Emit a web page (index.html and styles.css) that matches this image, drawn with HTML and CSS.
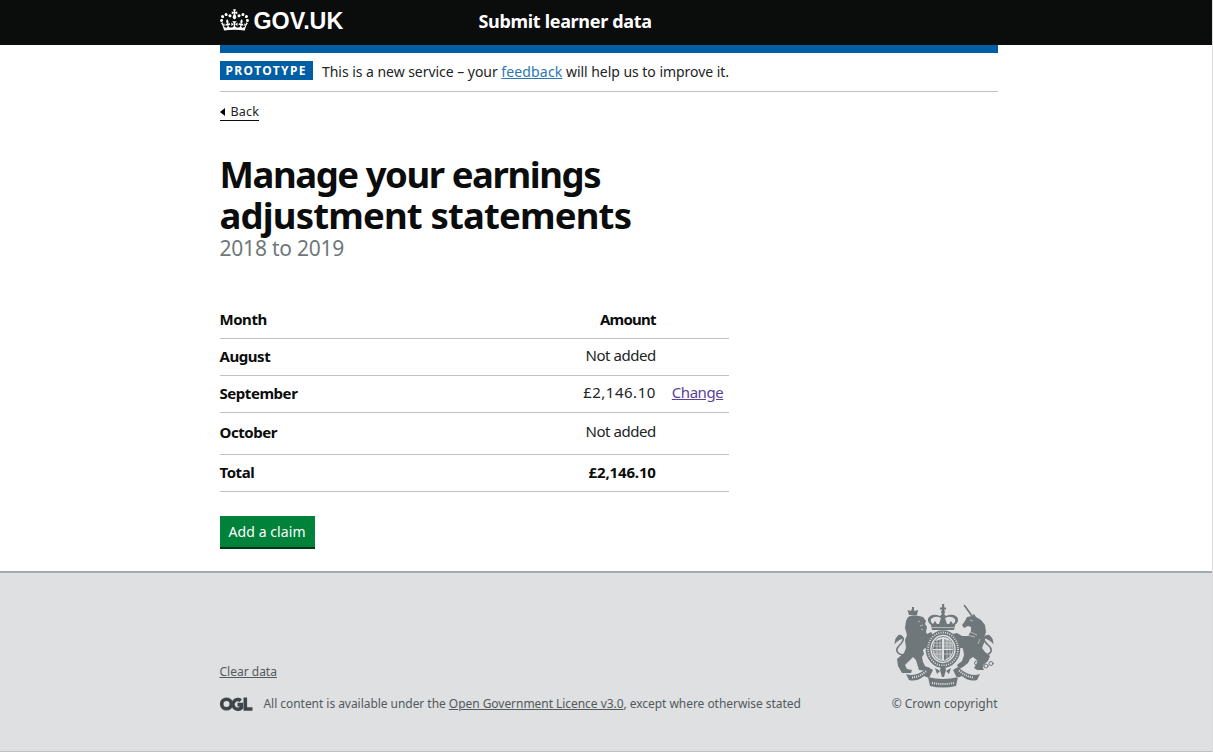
FILE: index.html
```html
<!DOCTYPE html>
<html lang="en">
<head>
<meta charset="utf-8">
<title>Manage your earnings adjustment statements</title>
<link rel="stylesheet" href="styles.css">
</head>
<body>
<header class="header">
  <div class="container header-inner">
    <a class="logo">
      <svg class="crown" viewBox="0 0 132 97" fill="currentColor"><path fill-rule="evenodd" d="M25 30.2c3.5 1.5 7.7-.2 9.1-3.7 1.5-3.6-.2-7.8-3.9-9.2-3.6-1.4-7.6.3-9.1 3.9-1.4 3.5.3 7.5 3.9 9zM9 39.5c3.6 1.5 7.8-.2 9.2-3.7 1.5-3.6-.2-7.8-3.9-9.1-3.6-1.5-7.6.2-9.1 3.8-1.4 3.5.3 7.5 3.8 9zM4.4 57.2c3.5 1.5 7.7-.2 9.1-3.8 1.5-3.6-.2-7.7-3.9-9.1-3.5-1.5-7.6.3-9.1 3.8-1.4 3.5.3 7.6 3.9 9.1zm38.3-21.4c3.5 1.5 7.7-.2 9.1-3.8 1.5-3.6-.2-7.7-3.9-9.1-3.6-1.5-7.6.3-9.1 3.8-1.3 3.6.4 7.7 3.9 9.1zm64.4-5.6c-3.6 1.5-7.8-.2-9.1-3.7-1.5-3.6.2-7.8 3.8-9.2 3.6-1.4 7.7.3 9.2 3.9 1.3 3.5-.4 7.5-3.9 9zm15.9 9.3c-3.6 1.5-7.7-.2-9.1-3.7-1.5-3.6.2-7.8 3.7-9.1 3.6-1.5 7.7.2 9.2 3.8 1.5 3.5-.3 7.5-3.8 9zm4.7 17.7c-3.6 1.5-7.8-.2-9.2-3.8-1.5-3.6.2-7.7 3.9-9.1 3.6-1.5 7.7.3 9.2 3.8 1.3 3.5-.4 7.6-3.9 9.1zM89.3 35.8c-3.6 1.5-7.8-.2-9.2-3.8-1.4-3.6.2-7.7 3.9-9.1 3.6-1.5 7.7.3 9.2 3.8 1.4 3.6-.3 7.7-3.9 9.1zM69.7 17.7l8.9 4.7V9.3l-8.9 2.8c-.2-.3-.5-.6-.9-.9L72.4 0H59.6l3.5 11.2c-.3.3-.6.5-.9.9l-8.8-2.8v13.1l8.8-4.7c.3.3.6.7.9.9l-5 15.4v.1c-.2.8-.4 1.6-.4 2.4 0 4.1 3.1 7.5 7 8.1h.2c.3 0 .7.1 1 .1.4 0 .7 0 1-.1h.2c4-.6 7.1-4.1 7.1-8.1 0-.8-.1-1.7-.4-2.4V34l-5.1-15.4c.4-.2.7-.6 1-.9zM66 92.8c16.9 0 32.8 1.1 47.1 3.2 4-16.9 8.9-26.7 14-33.5l-9.6-3.4c1 4.9 1.1 7.2 0 10.2-1.5-1.4-3-4.3-4.2-8.7L108.6 76c2.8-2 5-3.2 7.5-3.3-4.4 9.4-10 11.9-13.6 11.2-4.3-.8-6.3-4.6-5.6-7.9 1-4.7 5.7-5.9 8-.5 4.3-8.7-3-11.4-7.6-8.8 7.1-7.2 7.9-13.5 2.1-21.1-8 6.1-8.1 12.3-4.5 20.8-4.7-5.4-12.1-2.5-9.5 6.2 3.4-5.2 7.9-2 7.2 3.1-.6 4.3-6.4 7.8-13.5 7.2-10.3-.9-10.9-8-11.2-13.8 2.5-.5 7.1 1.8 11 7.3L80.2 60c-4.1 4.4-8 5.3-12.3 5.4 1.4-4.4 8-11.6 8-11.6H55.5s6.4 7.2 7.9 11.6c-4.2-.1-8-1-12.3-5.4l1.4 16.4c3.9-5.5 8.5-7.7 10.9-7.3-.3 5.8-.9 12.8-11.1 13.8-7.2.6-12.9-2.9-13.5-7.2-.7-5 3.8-8.3 7.1-3.1 2.7-8.7-4.6-11.6-9.4-6.2 3.7-8.5 3.6-14.7-4.6-20.8-5.8 7.6-5 13.9 2.2 21.1-4.7-2.6-11.9.1-7.7 8.8 2.3-5.5 7.1-4.2 8.1.5.7 3.3-1.3 7.1-5.7 7.9-3.5.7-9-1.8-13.5-11.2 2.5.1 4.7 1.3 7.5 3.3l-4.7-15.4c-1.2 4.4-2.7 7.2-4.3 8.7-1.1-3-.9-5.3 0-10.2l-9.5 3.4c5 6.9 9.9 16.7 14 33.5 14.8-2.1 30.8-3.2 47.7-3.2z"/></svg>
      <span class="logo-text">GOV.UK</span>
    </a>
    <a class="service">Submit learner data</a>
  </div>
</header>
<main class="container main">
  <div class="phase">
    <strong class="tag">PROTOTYPE</strong>
    <span class="phase-text">This is a new service – your <a class="link">feedback</a> will help us to improve it.</span>
  </div>
  <a class="back"><svg class="arrow" viewBox="0 0 5 8"><path d="M5 0v8L0 4z"/></svg>Back</a>
  <h1 class="title"><span class="title-first">Manage your earnings</span><br>adjustment statements</h1>
  <p class="years">2018 to 2019</p>
  <div class="table">
    <div class="row"><b class="month">Month</b><b class="amount">Amount</b></div>
    <div class="row"><b class="month">August</b><span class="amount">Not added</span></div>
    <div class="row"><b class="month">September</b><span class="amount sum">£2,146.10</span><a class="change">Change</a></div>
    <div class="row row-tall"><b class="month">October</b><span class="amount">Not added</span></div>
    <div class="row row-total"><b class="month">Total</b><b class="amount total">£2,146.10</b></div>
  </div>
  <a class="button">Add a claim</a>
</main>
<footer class="footer">
  <div class="container footer-inner">
    <div class="meta">
      <a class="clear">Clear data</a>
      <div class="licence">
        <svg class="ogl" viewBox="0 0 33 14" fill="none" stroke="#3f4649" stroke-width="3.6"><circle cx="6.5" cy="7" r="4.800"/><path d="M20.800 3.700A4.800 4.800 0 1 0 21.300 10.700V7.600H17.500M25.300.5V12H32.500"/></svg>
        <span class="licence-text">All content is available under the <a class="ulink">Open Government Licence v3.0</a>, except where otherwise stated</span>
      </div>
    </div>
    <div class="copyright">
      <svg class="crest" viewBox="0 0 102 84" fill="#6f777b">
        <!-- lion -->
        <path d="M16 11L14.500 6L18 7L19 4.500L20.500 4.500L21.500 7L25 6L24 11ZM19 3h2v3h-2z"/>
        <path d="M15 13Q20 10 26 12L30 13L33 17L32 20L34 23L33 28L35 33L37 37L38 39L36 44L32 44L30 46L31 50L29 53L30 58L32 62L36 64L34 67L26 66L23 56L20 53L15 58L12 61L14 65L19 66L18 69L9 69L5 62L4 55L11 49L13 44L12 36L14 31L12 24L13 17Z"/>
        <path d="M29 27L34 30L38 28L40 31L37 34L31 34Z"/>
        <!-- unicorn -->
        <path d="M74 13L79 12L81 10L83 13L88 16L92 21L93 28L91 34L91 39L89 44L92 48L97 52L95 57L89 62L91 66L84 66L81 64L85 57L80 53L77 55L75 59L70 63L66 65L64 61L69 57L71 51L70 45L67 41L65 36L61 33L60 30L64 29L69 32L75 32L78 27L78 23L75 22L71 24L69 21L72 17Z"/>
        <path d="M72 44L65 44L62 40L65 38L73 40Z"/>
        <!-- tails, horn and chain -->
        <g fill="none" stroke="#6f777b" stroke-width="1.600" stroke-linecap="round">
          <path d="M12 51C5 51 2 47 5 43C9 39 12 35 9 33C7 31 5 33 5 36M91 51C97 51 100 47 97 43C93 39 89 36 92 33C94 31 97 33 97 36M79 12L71.500 1.500"/>
          <path d="M2 39Q2 34 6 31Q9 31 10 34Q6 35 2 39ZM100 39Q100 34 96 31Q93 31 92 34Q96 35 100 39Z" stroke-width=".8" fill="#6f777b"/>
          <g stroke-width="1"><circle cx="83.500" cy="59" r="2"/><circle cx="88" cy="62" r="2"/><circle cx="93" cy="62" r="2"/><circle cx="98" cy="59.500" r="2"/></g>
        </g>
        <!-- royal crown -->
        <path fill-rule="evenodd" d="M39 26L38 21Q33 17 36 13Q40 9 47 12L50 9L53 12Q60 9 64 13Q67 17 62 21L61 26ZM40 20L42 17L44 20L46 20L48 14Q42 11 38 15Q37 18 40 20ZM60 20Q63 18 62 15Q58 11 52 14L54 20L56 20L58 17Z"/>
        <path d="M49 0h2.200v10H49zM47 3.500h6v2h-6z"/><circle cx="50" cy="8" r="2"/>
        <!-- shield inside the garter -->
        <g fill="none" stroke="#6f777b"><ellipse cx="50" cy="45" rx="15" ry="16.500" stroke-width="4.600"/><ellipse cx="50" cy="45" rx="11" ry="12.500" stroke-width=".8"/></g>
        <path d="M42 37L49 35V45H40ZM51 46H60Q58 54 51 56Z"/>
        <path d="M51 35L58 37L60 45H51ZM40 46H49V56Q42 54 40 46Z" opacity=".65"/>
        <g fill="none" stroke="#dee0e2" stroke-width=".6">
          <path d="M39 23.500H61M40 39H60M41 42H59M44 36V54M47 35V55M54 35V55M57 36V54M41 50H59"/>
          <ellipse cx="50" cy="45" rx="15" ry="16.500" stroke-width="1.800" stroke-dasharray="1 1.300"/>
          <path d="M25 18l2-1M27 22l3-1M28 25l2 1M77 16l3 1M75 27l9 4M74 31l8 2M87 35l-2 5"/>
        </g>
        <!-- motto ribbons -->
        <path d="M13 70Q21 73 30 67L35 63L40 66L36 74L31 72Q24 78 16 76ZM87 70Q79 73 70 67L65 63L60 66L64 74L69 72Q76 78 84 76ZM35 73Q50 77 65 73L63 82Q50 85 37 82Z"/>
        <path d="M48 62h4l1 4-2 7h-2l-2-7zM42 64l5 3-3 3zM58 64l-5 3 3 3z"/>
        <path d="M19 73.500Q27 73 34 66.500M66 66.500Q73 73 81 73.500M39 79Q50 81 61 79" fill="none" stroke="#dee0e2" stroke-width="2" stroke-dasharray="1 1.100"/>
      </svg>
      <span>© Crown copyright</span>
    </div>
  </div>
</footer>
</body>
</html>
```
FILE: styles.css
```css
* { box-sizing: border-box; }
body { margin: 0; width: 1213px; height: 752px; overflow: hidden; display: flex; flex-direction: column; background: #fff; color: #0b0c0c; font-family: "Noto Sans", "Open Sans", sans-serif; font-size: 15px; border-right: 1px solid #dcdcde; }
.container { width: 778px; margin-left: 219.5px; }
.header { height: 45px; width: 1213px; background: #0b0c0c; color: #fff; flex: none; }
.header-inner { display: flex; align-items: center; height: 42px; }
.logo { display: flex; align-items: center; width: 259px; }
.crown { width: 29px; height: 22px; margin-right: 5px; margin-top: -2px; }
.logo-text { font: bold 23.3px/26px "Liberation Sans", Arial, sans-serif; }
.service { font-size: 18px; font-weight: 700; white-space: nowrap; letter-spacing: -.32px; }
.main { height: 526px; flex: none; display: flex; flex-direction: column; align-items: flex-start; border-top: 8px solid #005ea5; }
.phase { width: 100%; height: 39px; padding-bottom: 1px; display: flex; align-items: center; border-bottom: 1px solid #bfc1c3; white-space: nowrap; font-size: 14px; line-height: 20px; letter-spacing: -.04px; color: #222425; }
.tag { width: 93.5px; height: 19px; padding-left: 6px; background: #005ea5; color: #fff; font-size: 12px; line-height: 19px; letter-spacing: 1.4px; margin-right: 9px; margin-top: -2px; }
.link { color: #2b76b4; text-decoration: underline; letter-spacing: .15px; }
.back { display: flex; align-items: center; height: 18px; margin-top: 11px; border-bottom: 1px solid #0b0c0c; font-size: 12.5px; line-height: 17px; letter-spacing: .2px; color: #222425; }
.arrow { width: 5px; height: 8px; margin-right: 6px; }
.title { margin: 33px 0 0; font-size: 36.5px; line-height: 41px; letter-spacing: -.83px; white-space: nowrap; }
.title-first { letter-spacing: -1.43px; }
.years { margin: 0; font-size: 21px; line-height: 24px; letter-spacing: -.22px; color: #6f777b; }
.table { width: 509.5px; margin-top: 42px; }
.row { display: flex; align-items: center; height: 37px; padding-bottom: 2px; border-bottom: 1px solid #bfc1c3; white-space: nowrap; letter-spacing: -.45px; }
.row-tall { height: 42px; padding-bottom: 3px; }
.row-total { padding-bottom: 3px; }
.month { width: 240px; }
.amount { width: 196.3px; text-align: right; }
b.amount { letter-spacing: -.75px; }
b.total { letter-spacing: -.15px; }
span.amount, .change { padding-bottom: 2px; color: #222425; }
span.sum { letter-spacing: .5px; }
.change { margin-left: 16px; color: #5b3f99; text-decoration: underline; }
.button { width: 95.5px; height: 33px; margin-top: 24px; padding-left: 9px; background: #00823b; border-bottom: 2px solid #003618; color: #fff; font-size: 14px; line-height: 31px; letter-spacing: .08px; white-space: nowrap; }
.footer { flex: 1; width: 1213px; background: #dee0e2; border-top: 2px solid #a1acb2; border-bottom: 1px solid #bfc1c3; border-right: 1px solid #c6c8ca; }
.footer-inner { display: flex; justify-content: space-between; align-items: flex-end; height: 139px; color: #54595c; font-size: 12px; line-height: 16px; white-space: nowrap; }
.meta { display: flex; flex-direction: column; align-items: flex-start; gap: 16px; }
.clear, .ulink { text-decoration: underline; }
.licence { display: flex; align-items: center; letter-spacing: -.045px; }
.ogl { width: 33px; height: 14px; margin-right: 11px; }
.copyright { display: flex; flex-direction: column; align-items: flex-end; }
.crest { width: 102px; height: 84px; margin: 0 3px 8px 0; }
```
